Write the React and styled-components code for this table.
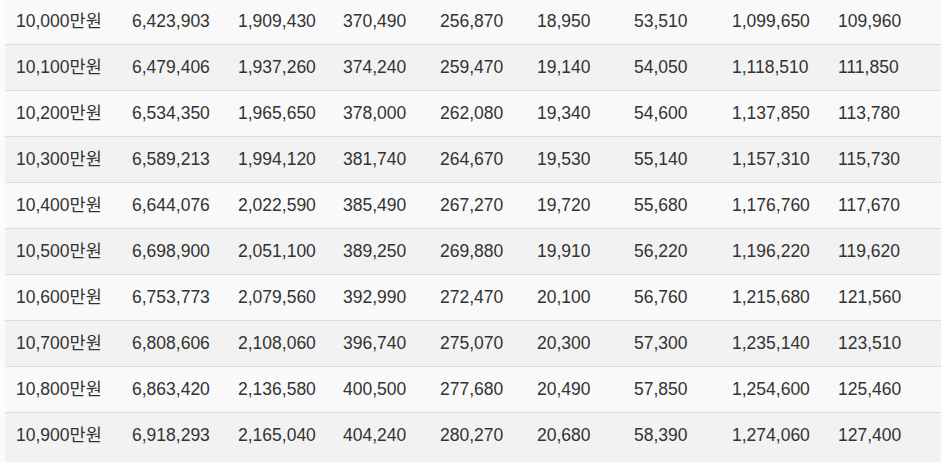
import React from 'react';
import styled, { createGlobalStyle } from 'styled-components';

const GlobalStyle = createGlobalStyle`
  html, body {
    margin: 0;
    padding: 0;
    background: #fbfbfb;
    overflow: hidden;
  }
`;

const StyledPage = styled.div`
  padding-left: 5px;
  height: 462px;
  overflow: hidden;
`;

const StyledTable = styled.div`
  margin-top: -2px;
  background: #f2f2f2;
  min-height: 470px;
  font-family: "Liberation Sans", Arial, "Noto Sans CJK KR", sans-serif;
  font-size: 17.5px;
  color: #333;
`;

const StyledRow = styled.div`
  display: grid;
  grid-template-columns: 116px 106px 105px 97px 97px 97px 98px 106px 1fr;
  height: 45px;
  padding-left: 11px;
  border-top: 1px solid #dddddd;
  background: ${(props) => (props.odd ? '#f9f9f9' : '#f2f2f2')};
`;

const StyledCell = styled.div`
  padding-top: 13px;
  line-height: 18px;
  white-space: nowrap;
`;

const rows = [
  ['10,000만원', '6,423,903', '1,909,430', '370,490', '256,870', '18,950', '53,510', '1,099,650', '109,960'],
  ['10,100만원', '6,479,406', '1,937,260', '374,240', '259,470', '19,140', '54,050', '1,118,510', '111,850'],
  ['10,200만원', '6,534,350', '1,965,650', '378,000', '262,080', '19,340', '54,600', '1,137,850', '113,780'],
  ['10,300만원', '6,589,213', '1,994,120', '381,740', '264,670', '19,530', '55,140', '1,157,310', '115,730'],
  ['10,400만원', '6,644,076', '2,022,590', '385,490', '267,270', '19,720', '55,680', '1,176,760', '117,670'],
  ['10,500만원', '6,698,900', '2,051,100', '389,250', '269,880', '19,910', '56,220', '1,196,220', '119,620'],
  ['10,600만원', '6,753,773', '2,079,560', '392,990', '272,470', '20,100', '56,760', '1,215,680', '121,560'],
  ['10,700만원', '6,808,606', '2,108,060', '396,740', '275,070', '20,300', '57,300', '1,235,140', '123,510'],
  ['10,800만원', '6,863,420', '2,136,580', '400,500', '277,680', '20,490', '57,850', '1,254,600', '125,460'],
  ['10,900만원', '6,918,293', '2,165,040', '404,240', '280,270', '20,680', '58,390', '1,274,060', '127,400'],
];

export default function App() {
  return (
    <StyledPage>
      <GlobalStyle />
      <StyledTable>
        {rows.map((row, i) => (
          <StyledRow key={row[0]} odd={i % 2 === 0}>
            {row.map((val, j) => (
              // eslint-disable-next-line react/no-array-index-key
              <StyledCell key={j}>{val}</StyledCell>
            ))}
          </StyledRow>
        ))}
      </StyledTable>
    </StyledPage>
  );
}
